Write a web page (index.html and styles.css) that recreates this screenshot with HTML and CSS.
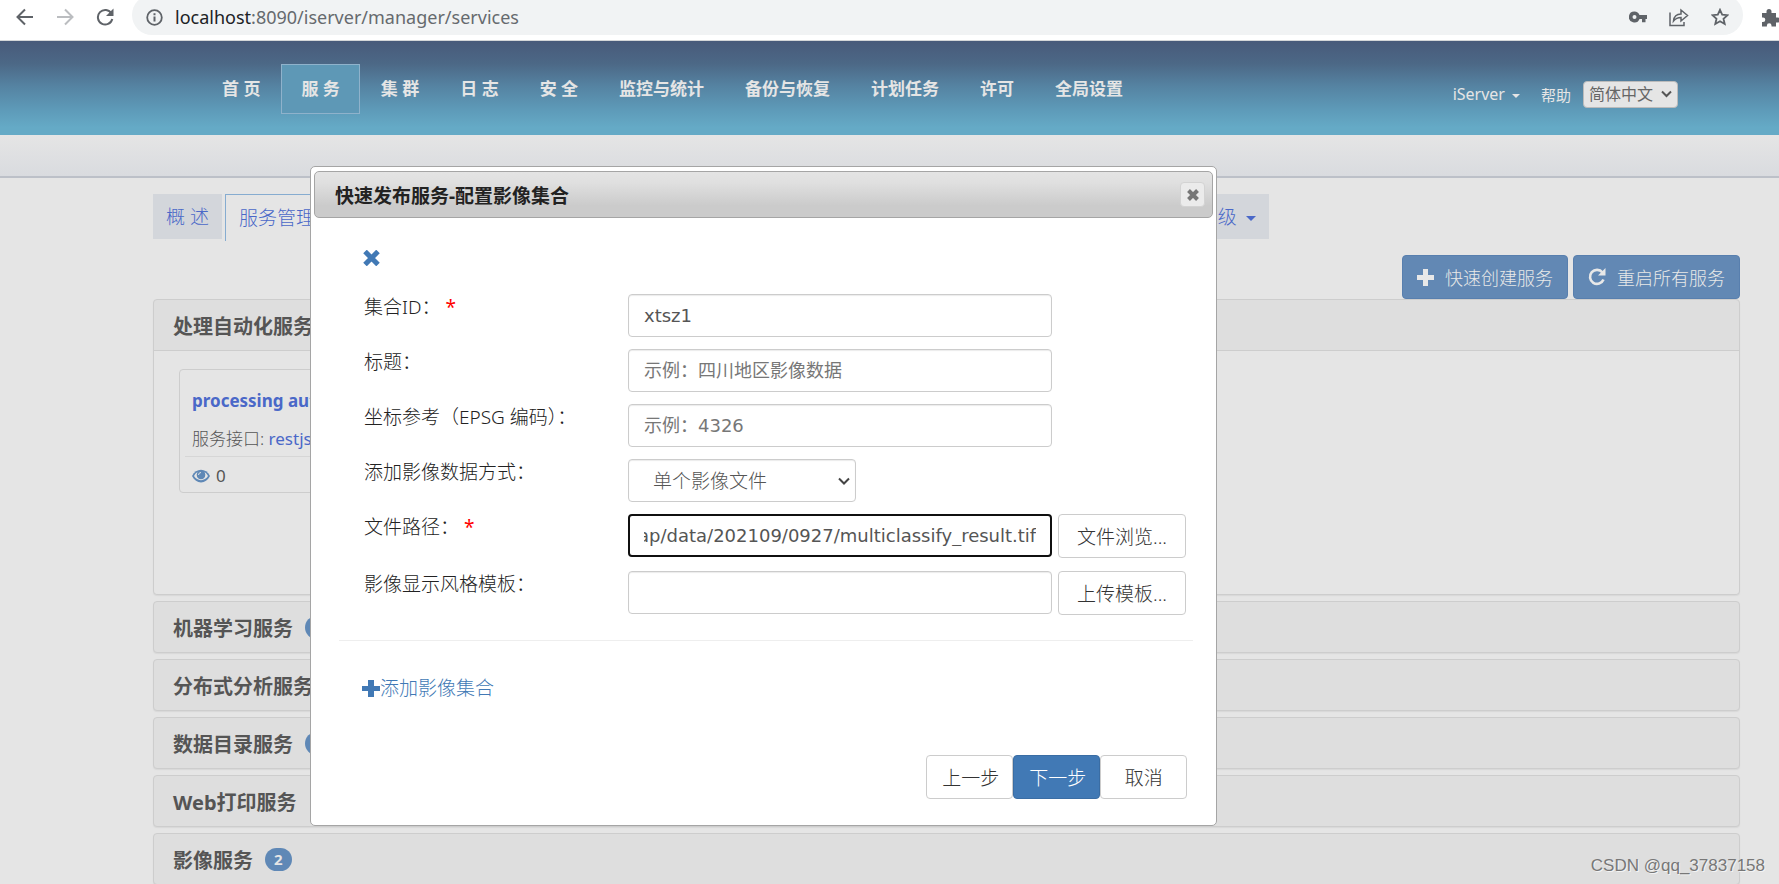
FILE: index.html
```html
<!DOCTYPE html>
<html lang="zh-CN">
<head>
<meta charset="utf-8">
<title>服务管理</title>
<link rel="stylesheet" href="styles.css">
</head>
<body>
<div class="browser-bar">
  <button class="bar-btn" aria-label="Back"><svg width="18" height="18" viewBox="0 0 18 18" fill="none" stroke="#5f6368" stroke-width="2"><path d="M17 9H2M9 1.5L1.5 9L9 16.5"/></svg></button>
  <button class="bar-btn" aria-label="Forward"><svg width="18" height="18" viewBox="0 0 18 18" fill="none" stroke="#bbbdc0" stroke-width="2"><path d="M1 9H16M9 1.5L16.5 9L9 16.5"/></svg></button>
  <button class="bar-btn" aria-label="Reload"><svg width="18" height="18" viewBox="0 0 18 18"><path d="M15.5 5.5A7.3 7.3 0 1 0 16.3 11" fill="none" stroke="#5f6368" stroke-width="2"/><path d="M17.5 0.5V8H10z" fill="#5f6368"/></svg></button>
  <div class="omnibox">
    <svg width="17" height="17" viewBox="0 0 17 17"><circle cx="8.500" cy="8.500" r="7.300" fill="none" stroke="#5f6368" stroke-width="1.800"/><path d="M7.500 7.500h2v5h-2zM7.500 4.300h2v2h-2z" fill="#5f6368"/></svg>
    <span class="url"><span class="host">localhost</span>:8090/iserver/manager/services</span>
    <svg width="18" height="12" viewBox="0 0 18 12" fill="#5f6368" fill-rule="evenodd"><path d="M5.500 0.500a5.500 5.500 0 1 0 5 7.500H13v3.200h3.500V8H18V4h-7.500A5.500 5.500 0 0 0 5.500 0.500zM5.500 4a2 2 0 1 1 0 4a2 2 0 0 1 0-4z"/></svg>
    <svg width="20" height="19" viewBox="0 0 20 19" fill="none" stroke="#5f6368" stroke-width="1.500"><path d="M1 4.500V17.500H15V14"/><path d="M4.500 13C5 8.500 8 6 12 6V2L18.500 7.500L12 13V9.500C8.500 9.500 6.500 10.500 4.500 13z"/></svg>
    <svg width="18" height="18" viewBox="0 0 18 18" fill="none" stroke="#5f6368" stroke-width="1.800"><path d="M9 1.800L11.200 6.700L16.500 7.200L12.500 10.800L13.700 16L9 13.200L4.300 16L5.500 10.800L1.500 7.200L6.800 6.700z"/></svg>
  </div>
  <svg width="18" height="19" viewBox="0 0 18 19" fill="#5f6368"><path d="M1 5h4.500V3.500a2.500 2.500 0 0 1 5 0V5H15v4.500h1.500a2.500 2.500 0 0 1 0 5H15V18.500h-4.500v-1a2.300 2.300 0 0 0-4.600 0v1H1V14h1a2.300 2.300 0 0 0 0-4.600H1z"/></svg>
</div>

<header class="site-header">
  <nav class="main-nav">
    <a href="#">首 页</a><a href="#" class="current">服 务</a><a href="#">集 群</a><a href="#">日 志</a><a href="#">安 全</a><a href="#">监控与统计</a><a href="#">备份与恢复</a><a href="#">计划任务</a><a href="#">许可</a><a href="#">全局设置</a>
  </nav>
  <div class="user-nav">
    <a href="#" class="user">iServer<span class="caret"></span></a>
    <a href="#" class="help">帮助</a>
    <span class="select-wrap lang"><select aria-label="语言"><option>简体中文</option></select>
    <svg width="11" height="8" viewBox="0 0 11 8" fill="none" stroke="#555" stroke-width="2"><path d="M1 1.500L5.500 6L10 1.500"/></svg></span>
  </div>
</header>
<div class="sub-bar"></div>

<main class="page">
  <nav class="tabs">
    <a href="#" class="tab">概 述</a>
    <a href="#" class="tab active">服务管理</a>
    <a href="#" class="tab more">高级<span class="caret"></span></a>
  </nav>
  <div class="actions">
    <button class="action"><svg width="17" height="17" viewBox="0 0 17 17" fill="#e8e8e8"><path d="M6 0h5v6h6v5h-6v6H6v-6H0V6h6z"/></svg>快速创建服务</button>
    <button class="action"><svg width="18" height="18" viewBox="0 0 18 18"><path d="M14.500 4.500A7 7 0 1 0 15.500 11.500" fill="none" stroke="#e8e8e8" stroke-width="2.600"/><path d="M17.500 0V7.500H10z" fill="#e8e8e8"/></svg>重启所有服务</button>
  </div>
  <section class="panel open">
    <h2>处理自动化服务</h2>
    <div class="panel-body">
      <article class="card">
        <a href="#" class="card-title">processing automation</a>
        <p>服务接口: <a href="#">restjsr</a></p>
        <div class="views"><svg width="18" height="14" viewBox="0 0 18 14"><path d="M0 7C4-1.500 14-1.500 18 7C14 15.500 4 15.500 0 7z" fill="#5f88b6"/><path d="M2 7C3.200 4.800 4.500 3.500 6 2.800A4.300 4.300 0 1 0 12 2.800C13.500 3.500 14.800 4.800 16 7C13 12.500 5 12.500 2 7z" fill="#e5e5e5"/><circle cx="9" cy="5.800" r="4" fill="#5f88b6"/><path d="M6.500 6A2.600 2.600 0 0 1 9 3.500" fill="none" stroke="#e5e5e5"/></svg>0</div>
      </article>
    </div>
  </section>
  <section class="panel"><h2>机器学习服务<span class="badge">1</span></h2></section>
  <section class="panel"><h2>分布式分析服务</h2></section>
  <section class="panel"><h2>数据目录服务<span class="badge">1</span></h2></section>
  <section class="panel"><h2>Web打印服务</h2></section>
  <section class="panel"><h2>影像服务<span class="badge">2</span></h2></section>
</main>

<div class="dialog" role="dialog" aria-labelledby="dialog-title">
  <div class="dialog-head">
    <h1 id="dialog-title">快速发布服务-配置影像集合</h1>
    <button class="close" aria-label="关闭"><svg width="12" height="12" viewBox="0 0 12 12" stroke="#777" stroke-width="4"><path d="M1.500 1.500L10.500 10.500M10.500 1.500L1.500 10.500"/></svg></button>
  </div>
  <form class="dialog-body">
    <button type="button" class="remove" aria-label="移除"><svg width="17" height="16" viewBox="0 0 17 16" stroke="#4179b5" stroke-width="5"><path d="M2 1.500L15 14.500M15 1.500L2 14.500"/></svg></button>
    <div class="row"><label for="cid">集合ID：<em>*</em></label><input id="cid" type="text" value="xtsz1"></div>
    <div class="row"><label for="ctitle">标题：</label><input id="ctitle" type="text" placeholder="示例：四川地区影像数据"></div>
    <div class="row"><label for="epsg">坐标参考（EPSG 编码）：</label><input id="epsg" type="text" placeholder="示例：4326"></div>
    <div class="row"><label for="mode">添加影像数据方式：</label><span class="select-wrap mode"><select id="mode"><option>单个影像文件</option></select>
      <svg width="12" height="8" viewBox="0 0 12 8" fill="none" stroke="#444" stroke-width="2"><path d="M1 1.500L6 6.500L11 1.500"/></svg></span></div>
    <div class="row tall"><label for="path">文件路径：<em>*</em></label><input id="path" class="focused" type="text" value="ap/data/202109/0927/multiclassify_result.tif"><button type="button" class="btn">文件浏览...</button></div>
    <div class="row tall"><label for="tpl">影像显示风格模板：</label><input id="tpl" type="text"><button type="button" class="btn">上传模板...</button></div>
    <hr>
    <a href="#" class="add"><svg width="18" height="17" viewBox="0 0 18 17" fill="#4179b5"><path d="M6 0h6v6h6v5h-6v6H6v-6H0V6h6z"/></svg>添加影像集合</a>
    <div class="footer">
      <button type="button" class="btn">上一步</button><button type="button" class="btn primary">下一步</button><button type="button" class="btn">取消</button>
    </div>
  </form>
</div>
<div class="watermark">CSDN @qq_37837158</div>
<script src="main.js"></script>
</body>
</html>
```
FILE: main.js
```js
// Keep the end of a long path in view.
const path = document.getElementById('path');
path.scrollLeft = path.scrollWidth;
```
FILE: styles.css
```css
* { box-sizing: border-box; }

body {
  margin: 0;
  height: 100vh;
  overflow: hidden;
  position: relative;
  background: #e5e5e5;
  color: #555;
  font-family: "Noto Sans", "Noto Sans CJK SC", sans-serif;
  font-size: 17px;
}

a { color: #4a68c8; text-decoration: none; }
svg { display: block; flex: none; }
button, input, select { font: inherit; color: inherit; margin: 0; }
button { cursor: pointer; }

.caret {
  display: inline-block;
  border: 5px solid transparent;
  border-top-color: currentColor;
  border-bottom: 0;
}

.browser-bar {
  display: flex;
  align-items: center;
  height: 41px;
  padding: 0 0 6px 16px;
  background: #fff;
  border-bottom: 1px solid #d4d6d8;
  overflow: hidden;
}
.bar-btn { padding: 0; border: 0; background: none; margin-right: 22px; }
.omnibox {
  flex: 1;
  display: flex;
  align-items: center;
  gap: 22px;
  height: 40px;
  margin: -5px 18px 0 -4px;
  padding: 5px 14px 0;
  border-radius: 20px;
  background: #f1f3f4;
}
.url { flex: 1; margin-left: -10px; font-size: 18px; color: #666a6e; }
.host { color: #202124; }

.site-header {
  display: flex;
  align-items: center;
  height: 94px;
  padding: 0 101px 0 202px;
  background: linear-gradient(#485a7a, #4c6886 24%, #5583a2 48%, #5e9bb9 74%, #65aac6 92%);
}
.main-nav { display: flex; flex: 1; gap: 1px; margin-top: 2px; }
.main-nav a {
  padding: 0 19px;
  border: 1px solid transparent;
  line-height: 48px;
  font-weight: 700;
  color: #e5e5e5;
  white-space: nowrap;
}
.main-nav .current { background: #5e98b6; border-color: #8fb2cb; }
.user-nav { display: flex; align-items: center; gap: 12px; margin-top: 12px; }
.user-nav a { color: #e5e5e5; font-size: 15px; }
.user-nav .user { font-size: 16px; margin-right: 9px; }
.user .caret { border-width: 4px; border-bottom: 0; margin-left: 7px; vertical-align: middle; }

.select-wrap { position: relative; display: flex; align-items: center; }
.select-wrap select { appearance: none; width: 100%; }
.select-wrap svg { position: absolute; right: 6px; pointer-events: none; }
.lang select {
  width: 95px;
  height: 27px;
  padding: 0 5px;
  border: 1px solid #bbb;
  border-radius: 4px;
  background: #e5e5e5;
  color: #666;
  font-size: 16px;
}

.sub-bar {
  height: 43px;
  background: linear-gradient(#e5e5e5, #d9dbdf);
  border-bottom: 2px solid #bcc0c8;
}

.page { padding: 16px 39px 0 153px; }
.tabs { display: flex; gap: 3px; width: 70.3%; height: 47px; font-size: 19px; font-weight: 300; }
.tab { height: 45px; padding: 0 13px; line-height: 46px; background: #d3d6db; white-space: nowrap; }
.tab.active { height: 47px; background: #e5e5e5; border: 1px solid #86acd0; border-bottom: 0; }
.tab.more { margin-left: auto; }
.tab .caret { margin-left: 9px; vertical-align: middle; }

.actions { display: flex; justify-content: flex-end; gap: 5px; margin-top: 14px; }
.action {
  display: flex;
  align-items: center;
  gap: 11px;
  height: 44px;
  padding: 0 14px;
  border: 1px solid #587fae;
  border-radius: 4px;
  background: #6288b4;
  color: #e8e8e8;
  font-size: 18px;
  font-weight: 300;
}

.panel { margin-bottom: 6px; border: 1px solid #cdcdcd; border-radius: 4px; background: #dedede; box-shadow: 0 1px 1px #d8d8d8; }
.panel h2 {
  display: flex;
  align-items: center;
  gap: 12px;
  height: 50px;
  margin: 0;
  padding: 0 19px;
  font-size: 20px;
  font-weight: 700;
}
.badge {
  min-width: 27px;
  padding: 0 9px;
  border-radius: 12px;
  background: #5f88b6;
  color: #e5e5e5;
  font-size: 15px;
  line-height: 23px;
}
.panel-body { height: 244px; padding: 18px 25px; border-top: 1px solid #cdcdcd; background: #e5e5e5; border-radius: 0 0 4px 4px; }
.card { width: 320px; height: 124px; padding: 18px 5px 0; border: 1px solid #cdcdcd; border-radius: 4px; font-weight: 300; }
.card-title { display: block; padding: 0 7px; line-height: 26px; font-weight: 700; }
.card p { margin: 12px 0 0; padding: 0 7px 4px; line-height: 26px; border-bottom: 1px solid #d6d6d6; }
.card p a, .views { font-weight: 400; }
.views { display: flex; align-items: center; gap: 6px; padding: 0 7px; line-height: 38px; }

.dialog {
  position: absolute;
  left: 310px;
  top: 166px;
  width: 51vw;
  padding: 4px 3px;
  border: 1px solid #a5a5a5;
  border-radius: 5px;
  background: #fff;
  color: #222;
  font-size: 19px;
}
.dialog-head {
  display: flex;
  align-items: center;
  justify-content: space-between;
  height: 47px;
  padding: 0 7px 0 20px;
  border: 1px solid #a5a5a5;
  border-radius: 5px;
  background: linear-gradient(#e4e4e4, #dfdfdf 25%, #cbcbcb 75%);
}
.dialog-head h1 { margin: 0; font-size: 19px; font-weight: 700; }
.close {
  display: grid;
  place-items: center;
  width: 25px;
  height: 25px;
  padding: 0;
  border: 1px solid #d3d3d3;
  border-radius: 4px;
  background: #ebebeb;
}
.dialog-body { padding: 32px 20px 22px 25px; font-weight: 300; }
.remove { display: block; margin: 0 0 28px 24px; padding: 0; border: 0; background: none; }
.row { display: flex; align-items: flex-start; height: 55px; padding-left: 25px; }
.row.tall { height: 57px; }
.row label { width: 264px; line-height: 26px; }
.row em { margin-left: 5px; font-style: normal; font-weight: 400; color: #f00; }
.row input, .mode select {
  height: 43px;
  padding: 0 15px;
  border: 1px solid #ccc;
  border-radius: 4px;
  background: #fff;
  box-shadow: inset 0 1px 1px #ececec;
  color: #555;
}
.row input { width: 424px; font-family: "DejaVu Sans", "Noto Sans CJK SC", sans-serif; font-size: 18px; font-weight: 400; outline: 0; }
.row input::placeholder { color: #777; opacity: 1; }
.row input.focused { padding: 0 14px; border: 2px solid #101010; box-shadow: none; }
.mode { width: 228px; height: 43px; }
.mode select { padding: 0 24px; }
.btn {
  height: 44px;
  padding: 0 15px;
  border: 1px solid #ccc;
  border-radius: 4px;
  background: #fff;
  color: #333;
  white-space: nowrap;
  font-weight: 300;
}
.row .btn { width: 128px; margin-left: 6px; }
hr { margin: 12px 0 33px; border: 0; border-top: 1px solid #eee; }
.add { display: inline-flex; align-items: center; margin-left: 23px; line-height: 28px; color: #4179b5; }
.footer { display: flex; justify-content: flex-end; margin: 52px 6px 0 0; }
.footer .btn { width: 87px; }
.footer .primary { background: #4179b5; border-color: #3a6da4; color: #fff; }

.watermark {
  position: absolute;
  right: 14px;
  bottom: 8px;
  font-family: "Liberation Sans", sans-serif;
  font-size: 17px;
  color: #777;
  text-shadow: 1px 1px 0 #f4f4f4;
}
```
